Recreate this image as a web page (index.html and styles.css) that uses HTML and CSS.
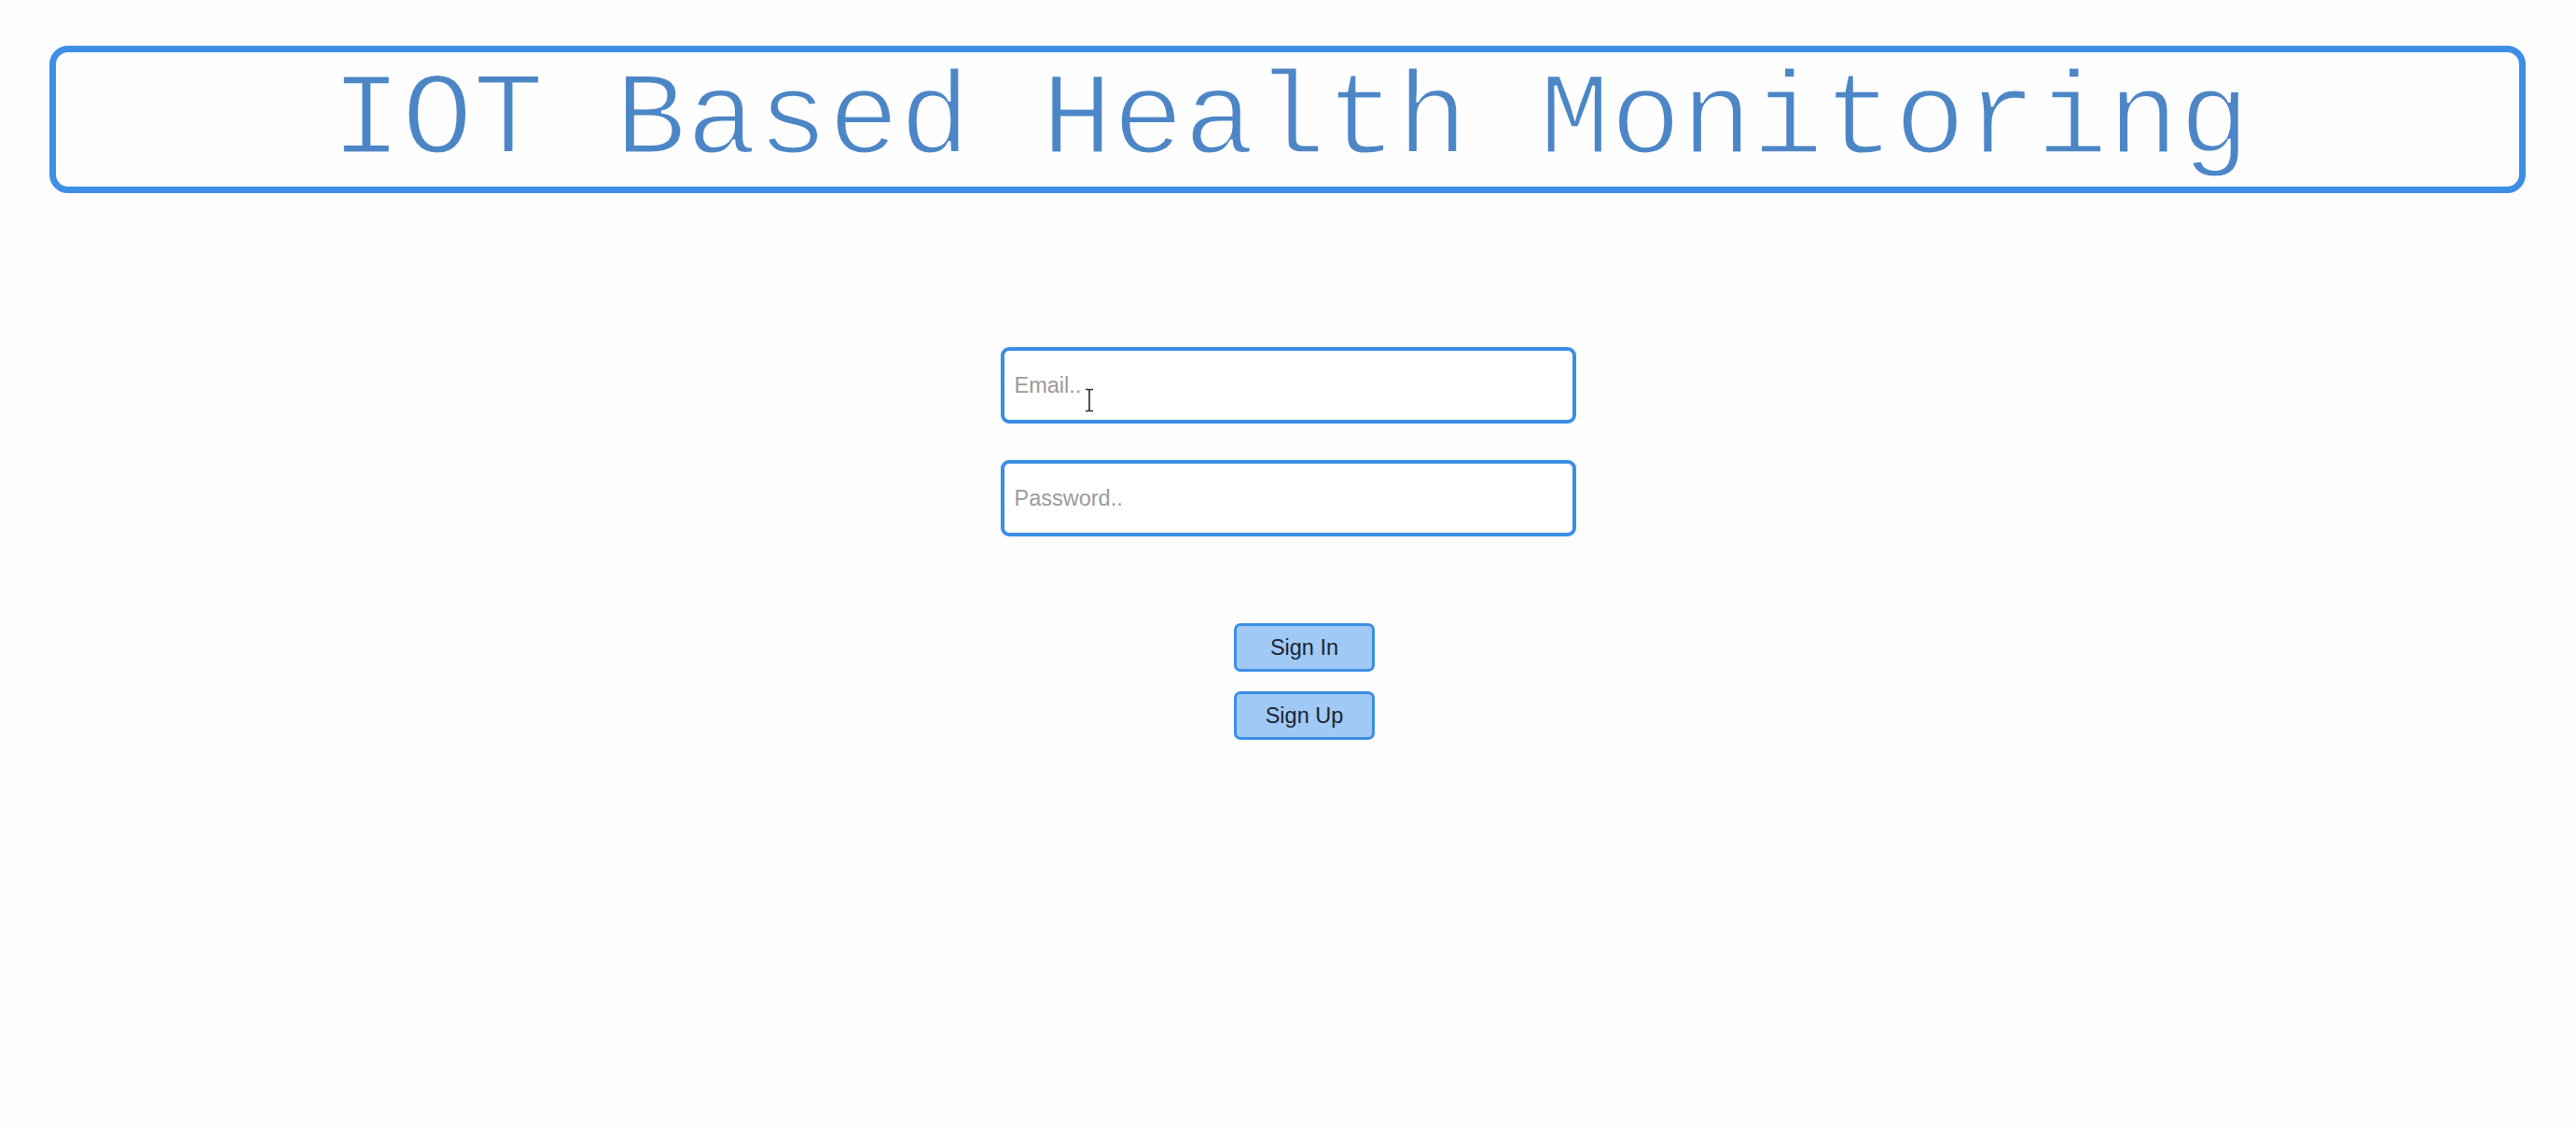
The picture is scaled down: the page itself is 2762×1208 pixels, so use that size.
FILE: index.html
```html
<!DOCTYPE html>
<html lang="en">
<head>
<meta charset="utf-8">
<title>IOT Based Health Monitoring</title>
<link rel="stylesheet" href="styles.css">
</head>
<body>
  <header class="title-box">
    <h1 class="title">IOT Based Health Monitoring</h1>
  </header>
  <main class="login">
    <form class="login-form">
      <div class="field">
        <input class="text-input" type="email" placeholder="Email..">
        <svg class="ibeam" width="10" height="26" viewBox="0 0 10 26" aria-hidden="true">
          <path d="M1 1.5 H4 M6 1.5 H9 M5 2.5 V23.5 M1 24.5 H4 M6 24.5 H9 M4 1.5 Q5 1.8 5 2.8 Q5 1.8 6 1.5 M4 24.5 Q5 24.2 5 23.2 Q5 24.2 6 24.5" fill="none" stroke="#2b2b2b" stroke-width="1.6"/>
        </svg>
      </div>
      <div class="field">
        <input class="text-input" type="password" placeholder="Password..">
      </div>
      <div class="actions">
        <button class="btn" type="button">Sign In</button>
        <button class="btn" type="button">Sign Up</button>
      </div>
    </form>
  </main>
</body>
</html>
```

FILE: styles.css
```css
html, body {
  margin: 0;
  padding: 0;
}

body {
  background: #fdfdfd;
  font-family: "Liberation Sans", Arial, sans-serif;
  min-height: 1208px;
}

.title-box {
  margin: 49px 54px 0 53px;
  border: 7px solid #3d8ee6;
  border-radius: 20px;
  background: #fefefe;
}

.title {
  margin: 0;
  text-align: center;
  font-family: "Liberation Mono", "Courier New", monospace;
  font-weight: normal;
  font-size: 127px;
  line-height: 144px;
  color: #4d86c6;
  padding-left: 6px;
  padding-top: 2px;
  height: 142px;
  -webkit-text-stroke: 3px #fefefe;
  paint-order: fill stroke;
}

.login {
  display: flex;
  justify-content: center;
  padding-top: 165px;
}

.login-form {
  display: flex;
  flex-direction: column;
  align-items: center;
  width: 617px;
}

.field {
  position: relative;
  width: 617px;
  margin-bottom: 39px;
}

.text-input {
  box-sizing: border-box;
  display: block;
  width: 617px;
  height: 82px;
  border: 4px solid #3b8ee4;
  border-radius: 9px;
  background: #ffffff;
  padding: 0 11px;
  font-family: "Liberation Sans", Arial, sans-serif;
  font-size: 23.5px;
  color: #333;
  outline: none;
}

.text-input::placeholder {
  color: #9a9a9a;
}

.ibeam {
  position: absolute;
  left: 90px;
  top: 44px;
}

.actions {
  display: flex;
  flex-direction: column;
  align-items: center;
  gap: 21px;
  margin-top: 54px;
  margin-left: 35px;
}

.btn {
  box-sizing: border-box;
  width: 151px;
  height: 52px;
  border: 3.5px solid #3b8ee4;
  border-radius: 7px;
  background: #a0c9f5;
  font-family: "Liberation Sans", Arial, sans-serif;
  font-size: 23.5px;
  color: #1c2430;
  padding: 0;
  cursor: pointer;
}
```
